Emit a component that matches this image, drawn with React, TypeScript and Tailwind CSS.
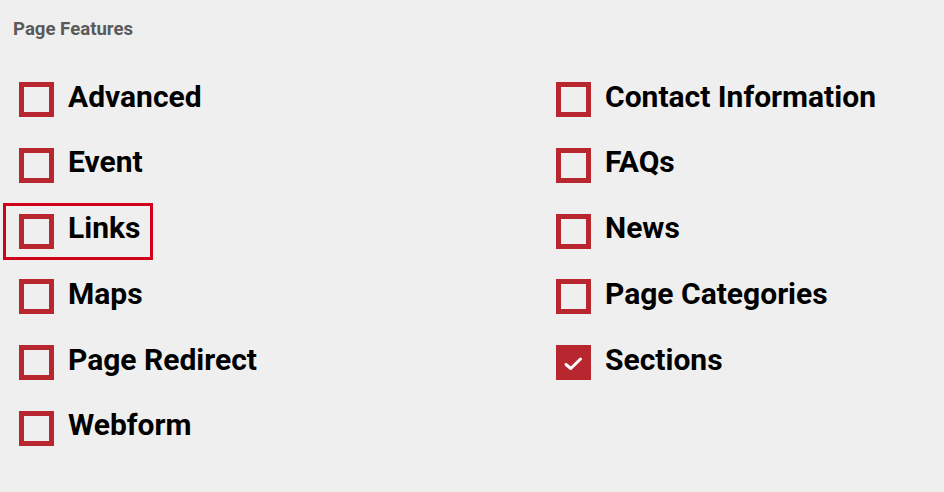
import React from "react";

const left = ["Advanced", "Event", "Links", "Maps", "Page Redirect", "Webform"];
const right = ["Contact Information", "FAQs", "News", "Page Categories", "Sections"];

function Item({ label, checked, focused }: { label: string; checked?: boolean; focused?: boolean }) {
  return (
    <label
      className={
        "flex items-center self-start justify-self-start h-[51px] pl-[13px] pr-[10px] " +
        (focused ? "outline-[3px] outline-solid outline-[#d0021b]" : "")
      }
    >
      <span
        className={
          "flex h-[35px] w-[35px] shrink-0 items-center justify-center border-[5px] border-[#b8272f] " +
          (checked ? "bg-[#b8272f]" : "")
        }
      >
        {checked && (
          <svg width="35" height="35" viewBox="0 0 35 35" className="shrink-0">
            <path d="M10 19.5 L14.8 23.5 L24.5 14" fill="none" stroke="#fff" strokeWidth="3" strokeLinecap="round" strokeLinejoin="round" />
          </svg>
        )}
      </span>
      <span className="ml-[14px] mb-[7px] whitespace-nowrap text-[30px] font-bold leading-[35px] text-black">{label}</span>
    </label>
  );
}

export default function App() {
  return (
    <div className="min-h-[492px] w-[944px] bg-[#efefef] font-['Roboto',sans-serif]">
      <div className="pl-[13px] pt-[17px] text-[18.6px] font-bold leading-[24px] text-[#5a5a5a]">Page Features</div>
      <div className="mt-[33px] grid grid-cols-[537px_1fr] pl-[6px]">
        <div className="flex flex-col gap-y-[14.8px]">
          {left.map((l) => (
            <Item key={l} label={l} focused={l === "Links"} />
          ))}
        </div>
        <div className="flex flex-col gap-y-[14.8px]">
          {right.map((l) => (
            <Item key={l} label={l} checked={l === "Sections"} />
          ))}
        </div>
      </div>
    </div>
  );
}
